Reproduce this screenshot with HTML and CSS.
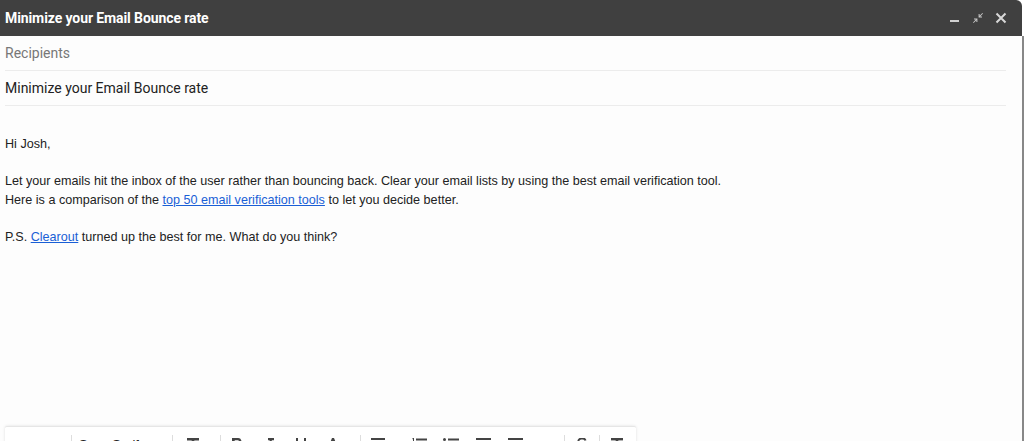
FILE: index.html
```html
<!DOCTYPE html>
<html lang="en">
<head>
  <meta charset="UTF-8">
  <title>Minimize your Email Bounce rate</title>
  <link rel="stylesheet" href="styles.css">
</head>
<body>
  <div class="compose">
    <div class="compose-header">
      <span class="compose-title">Minimize your Email Bounce rate</span>
      <div class="header-actions">
        <button class="hbtn" title="Minimize">
          <svg width="12" height="12" viewBox="0 0 12 12"><rect x="1" y="8" width="9" height="2" fill="#d0d0d0"/></svg>
        </button>
        <button class="hbtn" title="Full screen">
          <svg width="12" height="12" viewBox="0 0 12 12" fill="#c8c8c8">
            <path d="M11 1.6 10.4 1 7.6 3.8V2H6.6v3.4H10V4.4H8.2z"/>
            <path d="M1 10.4 1.6 11l2.8-2.8V10h1V6.6H2v1h1.8z"/>
          </svg>
        </button>
        <button class="hbtn" title="Close">
          <svg width="12" height="12" viewBox="0 0 12 12"><path d="M1.5 1.5l9 9M10.5 1.5l-9 9" stroke="#d8d8d8" stroke-width="2"/></svg>
        </button>
      </div>
    </div>

    <div class="compose-body">
      <div class="field field-muted">Recipients</div>
      <div class="field">Minimize your Email Bounce rate</div>

      <div class="message">
        <p>Hi Josh,</p>
        <p>Let your emails hit the inbox of the user rather than bouncing back. Clear your email lists by using the best email verification tool.<br>
        Here is a comparison of the <a href="#">top 50 email verification tools</a> to let you decide better.</p>
        <p>P.S. <a href="#">Clearout</a> turned up the best for me. What do you think?</p>
      </div>

      <div class="toolbar">
        <div class="tgroup tgroup-history">
          <button class="tbtn tbtn-low">
            <svg width="16" height="16" viewBox="0 0 16 16"><path d="M6 3 2 7l4 4M2 7h7a4 4 0 0 1 0 8H7" fill="none" stroke="#444" stroke-width="1.6"/></svg>
          </button>
          <button class="tbtn tbtn-low">
            <svg width="16" height="16" viewBox="0 0 16 16"><path d="M10 3l4 4-4 4M14 7H7a4 4 0 0 0 0 8h2" fill="none" stroke="#444" stroke-width="1.6"/></svg>
          </button>
        </div>
        <span class="tsep"></span>
        <div class="tgroup tgroup-font">
          <span class="font-name">Sans Serif</span>
          <svg width="8" height="8" viewBox="0 0 8 8"><path d="M1 3h6L4 6z" fill="#444"/></svg>
        </div>
        <span class="tsep"></span>
        <div class="tgroup tgroup-size">
          <svg width="14" height="14" viewBox="0 0 14 14" fill="#444"><rect x="0" y="0" width="12" height="2.5"/><rect x="4.7" y="0" width="2.6" height="13"/></svg>
          <svg width="8" height="8" viewBox="0 0 8 8"><path d="M1 3h6L4 6z" fill="#444"/></svg>
        </div>
        <span class="tsep"></span>
        <div class="tgroup tgroup-text">
          <button class="tbtn"><svg width="12" height="14" viewBox="0 0 12 14" fill="#444"><path d="M1 0h6a3.3 3.3 0 0 1 2 6 3.5 3.5 0 0 1-1.5 7H1zm2.7 2.3v3h3a1.5 1.5 0 0 0 0-3zm0 5.3v3.2h3.4a1.6 1.6 0 0 0 0-3.2z"/></svg></button>
          <button class="tbtn"><svg width="12" height="14" viewBox="0 0 12 14" fill="#444"><path d="M5 0h6v2.2H8.9l-2.6 9.6H8V14H2v-2.2h2.1L6.7 2.2H5z"/></svg></button>
          <button class="tbtn"><svg width="12" height="14" viewBox="0 0 12 14" fill="none" stroke="#444" stroke-width="2"><path d="M2 0v6a4 4 0 0 0 8 0V0M1 13h10"/></svg></button>
          <button class="tbtn"><svg width="12" height="14" viewBox="0 0 12 14" fill="#444"><path d="M5 0h2l4.4 11H9l-1-2.6H4L3 11H.6zm-.3 6.4h2.6L6 3z"/><rect x="0" y="12" width="12" height="2"/></svg></button>
        </div>
        <span class="tsep"></span>
        <div class="tgroup tgroup-para">
          <button class="tbtn tbtn-wide"><svg width="14" height="14" viewBox="0 0 14 14" fill="#444"><rect y="0" width="14" height="2"/><rect y="4" width="9" height="2"/><rect y="8" width="14" height="2"/><rect y="12" width="9" height="2"/></svg></button>
          <button class="tbtn"><svg width="16" height="14" viewBox="0 0 16 14" fill="#444"><path d="M1.5 0H3v4H2V1.2h-.5z"/><rect x="5" y="0.5" width="11" height="2"/><rect x="5" y="6" width="11" height="2"/><rect x="5" y="11.5" width="11" height="2"/></svg></button>
          <button class="tbtn"><svg width="16" height="14" viewBox="0 0 16 14" fill="#444"><circle cx="1.5" cy="1.5" r="1.5"/><circle cx="1.5" cy="7" r="1.5"/><circle cx="1.5" cy="12.5" r="1.5"/><rect x="5" y="0.5" width="11" height="2"/><rect x="5" y="6" width="11" height="2"/><rect x="5" y="11.5" width="11" height="2"/></svg></button>
          <button class="tbtn"><svg width="15" height="14" viewBox="0 0 15 14" fill="#444"><rect width="15" height="2"/><rect x="6" y="4" width="9" height="2"/><rect x="6" y="8" width="9" height="2"/><rect y="12" width="15" height="2"/><path d="M4 4v6L0 7z"/></svg></button>
          <button class="tbtn"><svg width="15" height="14" viewBox="0 0 15 14" fill="#444"><rect width="15" height="2"/><rect x="6" y="4" width="9" height="2"/><rect x="6" y="8" width="9" height="2"/><rect y="12" width="15" height="2"/><path d="M0 4v6l4-3z"/></svg></button>
        </div>
        <span class="tsep"></span>
        <div class="tgroup">
          <button class="tbtn tbtn-narrow"><svg width="12" height="14" viewBox="0 0 12 14" fill="none" stroke="#444" stroke-width="2"><path d="M9.5 2.5A3.5 2.5 0 0 0 2.5 3.5c0 2 7 2.5 7 6a3.5 2.5 0 0 1-7 .8M0 7h12"/></svg></button>
        </div>
        <span class="tsep"></span>
        <div class="tgroup">
          <button class="tbtn tbtn-narrow"><svg width="14" height="14" viewBox="0 0 14 14" fill="#444"><rect x="1" y="0" width="12" height="2.4"/><rect x="5.7" y="0" width="2.6" height="10"/><path d="M9 9.5l1-1 1.5 1.5L13 8.5l1 1-1.5 1.5L14 12.5l-1 1-1.5-1.5L10 13.5l-1-1 1.5-1.5z"/></svg></button>
        </div>
      </div>
    </div>
  </div>
</body>
</html>
```

FILE: styles.css
```css
* {
  box-sizing: border-box;
}
body {
  margin: 0;
  background: #fff;
  font-family: Roboto, "Liberation Sans", Arial, sans-serif;
}
.compose {
  width: 1024px;
  height: 441px;
  overflow: hidden;
  display: flex;
  flex-direction: column;
}
.compose-header {
  height: 36px;
  flex: none;
  display: flex;
  align-items: center;
  justify-content: space-between;
  padding: 0 15px 0 5px;
  background: #404040;
  border-top-right-radius: 6px;
  margin-right: 2px;
}
.compose-title {
  color: #fff;
  font-size: 14px;
  font-weight: 700;
  letter-spacing: -0.1px;
}
.header-actions {
  display: flex;
  gap: 11px;
}
.hbtn {
  width: 12px;
  height: 12px;
  padding: 0;
  border: none;
  background: none;
  display: flex;
}
.compose-body {
  flex: 1;
  background: #fdfdfd;
  border-right: 2px solid #888;
  padding: 0 16px 0 5px;
  position: relative;
}
.field {
  height: 35px;
  display: flex;
  align-items: center;
  border-bottom: 1px solid #ececec;
  font-size: 14px;
  color: #222;
}
.field-muted {
  color: #777;
}
.message {
  height: 320px;
  padding-top: 29px;
  font-family: "Liberation Sans", Arial, sans-serif;
  font-size: 12.6px;
  line-height: 18.5px;
  color: #222;
}
.message p {
  margin: 0 0 18.5px;
}
.message a {
  color: #1a5fd6;
}
.toolbar {
  width: 631px;
  height: 40px;
  display: flex;
  align-items: flex-start;
  background: #fff;
  border-top: 1px solid #e6e6e6;
  border-radius: 2px;
  box-shadow: 0 0 3px rgba(0, 0, 0, 0.12);
  font-family: "Liberation Sans", Arial, sans-serif;
}
.tgroup {
  display: flex;
  align-items: flex-start;
  height: 100%;
}
.tgroup-history {
  width: 66px;
}
.tgroup-font {
  width: 100px;
  padding: 11px 0 0 7px;
  gap: 12px;
  font-size: 13px;
  color: #222;
}
.font-name {
  margin-top: -1px;
}
.tgroup-font svg,
.tgroup-size svg {
  margin-top: 4px;
}
.tgroup-size {
  width: 47px;
  padding: 10px 0 0 14px;
  gap: 4px;
}
.tgroup-size svg:first-child {
  margin-top: 1px;
}
.tgroup-text {
  width: 139px;
}
.tgroup-para {
  width: 203px;
}
.tbtn {
  width: 32px;
  height: 100%;
  padding: 11px 0 0;
  border: none;
  background: none;
  display: flex;
  justify-content: center;
}
.tbtn-low {
  padding-top: 15px;
}
.tbtn-wide {
  width: 42px;
  justify-content: flex-start;
  padding-left: 10px;
}
.tbtn-narrow {
  width: 34px;
}
.tsep {
  width: 1px;
  height: 20px;
  margin-top: 8px;
  background: #ddd;
  flex: none;
}
```
